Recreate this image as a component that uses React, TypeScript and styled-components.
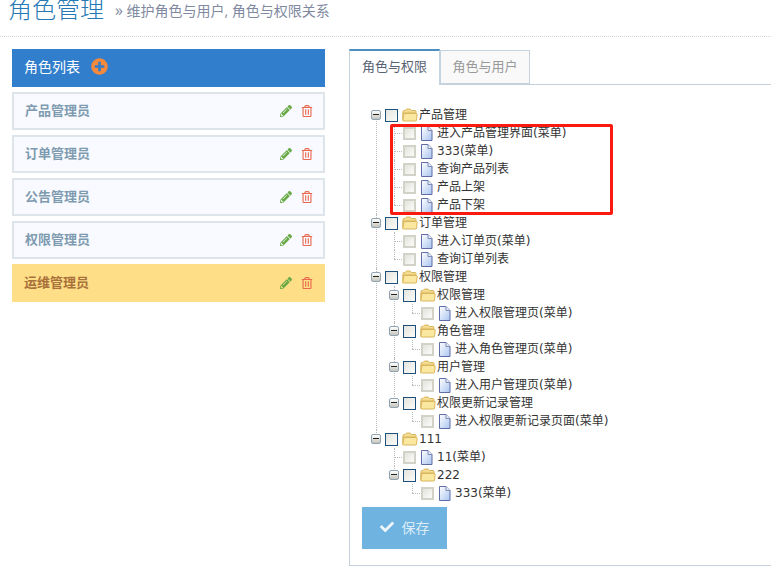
import { createGlobalStyle, styled } from "styled-components";
import { FaCheck, FaPencilAlt, FaPlusCircle, FaRegTrashAlt } from "react-icons/fa";

type TreeItem = {
  name: string;
  children?: TreeItem[];
};

const roles = ["产品管理员", "订单管理员", "公告管理员", "权限管理员", "运维管理员"];

const treeData: TreeItem[] = [
  {
    name: "产品管理",
    children: [
      { name: "进入产品管理界面(菜单)" },
      { name: "333(菜单)" },
      { name: "查询产品列表" },
      { name: "产品上架" },
      { name: "产品下架" },
    ],
  },
  {
    name: "订单管理",
    children: [{ name: "进入订单页(菜单)" }, { name: "查询订单列表" }],
  },
  {
    name: "权限管理",
    children: [
      { name: "权限管理", children: [{ name: "进入权限管理页(菜单)" }] },
      { name: "角色管理", children: [{ name: "进入角色管理页(菜单)" }] },
      { name: "用户管理", children: [{ name: "进入用户管理页(菜单)" }] },
      { name: "权限更新记录管理", children: [{ name: "进入权限更新记录页面(菜单)" }] },
    ],
  },
  {
    name: "111",
    children: [
      { name: "11(菜单)" },
      { name: "222", children: [{ name: "333(菜单)" }] },
    ],
  },
];

const FolderIcon = () => (
  <svg width="16" height="14" viewBox="0 0 16 14">
    <path d="M1 12.5V3.5Q1 2.5 2 2.5H3L4.5 1H8L9.5 2.5H13Q14 2.5 14 3.5V5H1Z" fill="#f3dc92" stroke="#d9b65c" />
    <path d="M.8 12.6 2 5.5H14.8L15.2 6 14.5 12.6 14 13H1.2Z" fill="#fbe8a0" stroke="#d9b65c" />
  </svg>
);

const FileIcon = () => (
  <svg width="13" height="15" viewBox="0 0 13 15">
    <defs>
      <linearGradient id="sheet" x1="0" y1="0" x2="1" y2="1">
        <stop offset="0" stopColor="#ffffff" />
        <stop offset="1" stopColor="#a9c4f0" />
      </linearGradient>
    </defs>
    <path d="M1.5 .5H8L12 4.5V14.5H1.5Z" fill="url(#sheet)" stroke="#5f6ca6" />
    <path d="M8 .5V4.5H12" fill="#e6eefb" stroke="#7f8bb5" />
  </svg>
);

const TreeNode = ({ item, last, first }: { item: TreeItem; last: boolean; first: boolean }) => (
  <NodeItem $last={last} $first={first}>
    <NodeRow>
      {item.children ? <Switch /> : <Connector />}
      <Check $leaf={!item.children} />
      <NodeIcon>{item.children ? <FolderIcon /> : <FileIcon />}</NodeIcon>
      <NodeName $leaf={!item.children}>{item.name}</NodeName>
    </NodeRow>
    {item.children && (
      <NodeList>
        {item.children.map((child, i) => (
          <TreeNode
            key={child.name + i}
            item={child}
            first={false}
            last={i === item.children!.length - 1}
          />
        ))}
      </NodeList>
    )}
  </NodeItem>
);

const App = () => (
  <>
    <GlobalStyle />
    <Page>
      <PageHeader>
        <Title>角色管理</Title>
        <Subtitle>
          <Quote>»</Quote> 维护角色与用户, 角色与权限关系
        </Subtitle>
      </PageHeader>
      <Content>
        <Sidebar>
          <ListHeader>
            角色列表
            <AddIcon>
              <FaPlusCircle />
            </AddIcon>
          </ListHeader>
          {roles.map((role, i) => (
            <RoleItem key={role} $active={i === roles.length - 1}>
              <RoleName>{role}</RoleName>
              <RoleActions>
                <EditIcon>
                  <FaPencilAlt />
                </EditIcon>
                <DeleteIcon>
                  <FaRegTrashAlt />
                </DeleteIcon>
              </RoleActions>
            </RoleItem>
          ))}
        </Sidebar>
        <Main>
          <Tabs>
            <Tab $active>角色与权限</Tab>
            <Tab>角色与用户</Tab>
          </Tabs>
          <TabContent>
            <Tree>
              {treeData.map((item, i) => (
                <TreeNode
                  key={item.name}
                  item={item}
                  first={i === 0}
                  last={i === treeData.length - 1}
                />
              ))}
              <Highlight />
            </Tree>
            <SaveButton>
              <FaCheck />
              保存
            </SaveButton>
          </TabContent>
        </Main>
      </Content>
    </Page>
  </>
);

const GlobalStyle = createGlobalStyle`
  html, body {
    margin: 0;
    height: 100%;
    overflow: hidden;
    background: #fff;
  }
  body {
    font-family: "Open Sans", "Noto Sans CJK SC", sans-serif;
  }
`;

const Page = styled.div`
  width: 771px;
  height: 576px;
  overflow: hidden;
`;

const PageHeader = styled.div`
  display: flex;
  align-items: baseline;
  height: 44px;
  margin-top: -8px;
  padding-left: 8px;
  border-bottom: 1px dotted #d5d5d5;
`;

const Title = styled.h1`
  margin: 0;
  font-size: 24px;
  line-height: 34px;
  font-weight: 300;
  color: #2679b5;
`;

const Subtitle = styled.span`
  margin: 0 0 8px 11px;
  align-self: center;
  font-size: 14px;
  color: #8089a0;
`;

const Quote = styled.span`
  font-size: 16px;
`;

const Content = styled.div`
  display: flex;
  align-items: flex-start;
  padding: 12px 0 0 12px;
`;

const Sidebar = styled.div`
  display: flex;
  flex: none;
  flex-direction: column;
  gap: 5px;
  width: 313px;
`;

const ListHeader = styled.div`
  display: flex;
  align-items: center;
  box-sizing: border-box;
  height: 38px;
  padding: 0 0 4px 12px;
  font-size: 14px;
  color: #fff;
  background: #317ecc;
`;

const AddIcon = styled.span`
  display: flex;
  margin-left: 11px;
  font-size: 17px;
  color: #f6893b;
`;

const RoleItem = styled.div<{ $active?: boolean }>`
  display: flex;
  align-items: center;
  justify-content: space-between;
  box-sizing: border-box;
  height: 38px;
  padding: ${(p) => (p.$active ? "0 12px" : "0 10px 0 11px")};
  font-size: 13px;
  font-weight: 700;
  color: ${(p) => (p.$active ? "#a9713a" : "#7e9bb0")};
  background: ${(p) => (p.$active ? "#fedf87" : "#f8faff")};
  border: ${(p) => (p.$active ? "none" : "2px solid #dde5eb")};
`;

const RoleName = styled.span`
  margin-bottom: 4px;
`;

const RoleActions = styled.span`
  display: flex;
  align-items: center;
  gap: 9px;
`;

const EditIcon = styled.span`
  display: flex;
  font-size: 12px;
  color: #69aa46;
`;

const DeleteIcon = styled.span`
  display: flex;
  font-size: 12px;
  color: #e8694d;
`;

const Main = styled.div`
  flex: none;
  width: 440px;
  margin-left: 24px;
`;

const Tabs = styled.div`
  display: flex;
  align-items: flex-end;
  height: 35px;
`;

const Tab = styled.div<{ $active?: boolean }>`
  box-sizing: border-box;
  display: flex;
  align-items: center;
  justify-content: center;
  width: ${(p) => (p.$active ? "91px" : "90px")};
  font-size: 13px;
  height: ${(p) => (p.$active ? "36px" : "34px")};
  padding-bottom: ${(p) => (p.$active ? "5px" : "3px")};
  color: ${(p) => (p.$active ? "#576373" : "#999")};
  background: ${(p) => (p.$active ? "#fff" : "#f9f9f9")};
  border: 1px solid #c5d3e0;
  border-top: ${(p) => (p.$active ? "2px solid #4c8fbd" : "1px solid #c5d3e0")};
  border-bottom: ${(p) => (p.$active ? "none" : "1px solid #c5d3e0")};
  margin-bottom: ${(p) => (p.$active ? "-1px" : "0")};
  position: relative;
`;

const TabContent = styled.div`
  box-sizing: border-box;
  height: 482px;
  padding: 21px 0 0 12px;
  border: 1px solid #c5d0dc;
  border-right: none;
`;

const Tree = styled.ul`
  position: relative;
  margin: 0;
  padding: 0 0 0 9px;
  list-style: none;
`;

const NodeList = styled.ul`
  margin: 0;
  padding: 0 0 0 18px;
  list-style: none;
`;

const NodeItem = styled.li<{ $last: boolean; $first: boolean }>`
  position: relative;

  &::before {
    content: "";
    position: absolute;
    left: 5px;
    top: ${(p) => (p.$first ? "9px" : "0")};
    bottom: ${(p) => (p.$last ? "auto" : "0")};
    height: ${(p) => (p.$last ? "9px" : "auto")};
    border-left: 1px dotted #bbb;
  }
`;

const NodeRow = styled.div`
  position: relative;
  display: flex;
  align-items: center;
  height: 18px;
`;

const Switch = styled.span`
  position: relative;
  flex: none;
  box-sizing: border-box;
  width: 10px;
  height: 10px;
  margin: 0 4px 0 0;
  border: 1px solid #8fa3b5;
  border-radius: 2px;
  background: linear-gradient(#ffffff, #c4c4ba);

  &::after {
    content: "";
    position: absolute;
    left: 1px;
    right: 1px;
    top: 3px;
    height: 1px;
    background: #222;
  }
`;

const Connector = styled.span`
  flex: none;
  width: 8px;
  margin: 0 1px 0 5px;
  border-top: 1px dotted #bbb;
`;

const Check = styled.span<{ $leaf: boolean }>`
  flex: none;
  box-sizing: border-box;
  width: 13px;
  height: 13px;
  border: ${(p) => (p.$leaf ? "2px solid #d2d2c8" : "1px solid #1f4f7c")};
  background: linear-gradient(135deg, #e4e4de, #fbfbf9);
`;

const NodeIcon = styled.span`
  display: flex;
  flex: none;
  margin-left: 4px;
`;

const NodeName = styled.span<{ $leaf: boolean }>`
  margin-left: ${(p) => (p.$leaf ? "4px" : "1px")};
  font-family: "DejaVu Sans", "Noto Sans CJK SC", sans-serif;
  font-size: 12px;
  line-height: 18px;
  color: #333;
  white-space: nowrap;
`;

const Highlight = styled.div`
  position: absolute;
  left: 28px;
  top: 18px;
  width: 223px;
  height: 91px;
  box-sizing: border-box;
  border: 3px solid #fb1a10;
  border-radius: 2px;
  pointer-events: none;
`;

const SaveButton = styled.button`
  display: flex;
  align-items: center;
  justify-content: center;
  gap: 8px;
  width: 85px;
  height: 42px;
  margin-top: 5px;
  padding: 0 0 3px;
  border: none;
  font-family: inherit;
  font-size: 14px;
  color: #dcecf7;
  background: #6fb3e0;

  svg {
    font-size: 14px;
    color: #eef6fb;
  }
`;

export default App;
